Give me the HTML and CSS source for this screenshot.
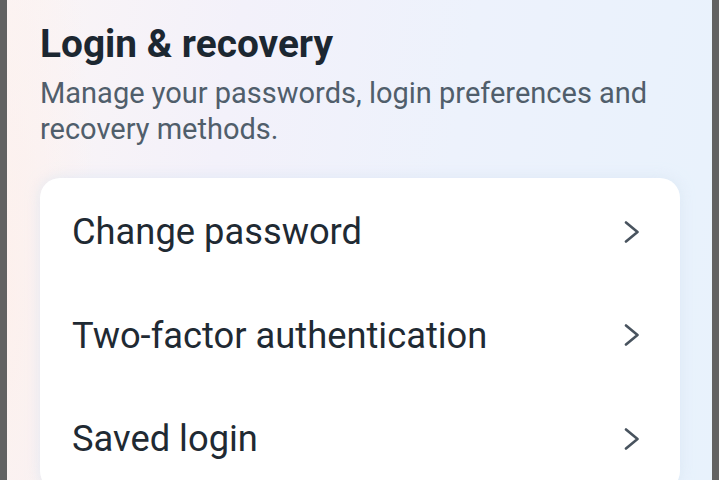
FILE: index.html
```html
<!DOCTYPE html>
<html lang="en">
<head>
<meta charset="utf-8">
<link rel="stylesheet" href="styles.css">
<title>Login & recovery</title>
</head>
<body>
<div class="frame">
  <div class="screen">
    <h1 class="title">Login &amp; recovery</h1>
    <p class="subtitle">Manage your passwords, login preferences and recovery methods.</p>
    <div class="card">
      <div class="row">
        <span class="label">Change password</span>
        <svg class="chev" width="16" height="22" viewBox="0 0 16 22"><path d="M2 1.5 L13.5 11 L2 20.5" fill="none" stroke="#48535e" stroke-width="2.6" stroke-linecap="round" stroke-linejoin="round"/></svg>
      </div>
      <div class="row">
        <span class="label">Two-factor authentication</span>
        <svg class="chev" width="16" height="22" viewBox="0 0 16 22"><path d="M2 1.5 L13.5 11 L2 20.5" fill="none" stroke="#48535e" stroke-width="2.6" stroke-linecap="round" stroke-linejoin="round"/></svg>
      </div>
      <div class="row">
        <span class="label">Saved login</span>
        <svg class="chev" width="16" height="22" viewBox="0 0 16 22"><path d="M2 1.5 L13.5 11 L2 20.5" fill="none" stroke="#48535e" stroke-width="2.6" stroke-linecap="round" stroke-linejoin="round"/></svg>
      </div>
    </div>
  </div>
</div>
</body>
</html>
```
FILE: styles.css
```css
html, body {
  margin: 0;
  padding: 0;
  height: 480px;
  overflow: hidden;
}
body {
  font-family: Roboto, "Noto Sans", sans-serif;
  background: #626262;
}
.frame {
  height: 480px;
  padding: 0 7px;
  box-sizing: border-box;
  background: #626262;
}
.screen {
  height: 480px;
  padding: 23px 32px 0 33px;
  box-sizing: border-box;
  background:
    radial-gradient(ellipse 90px 500px at 0% 60%, rgba(253, 240, 236, 0.9), rgba(253, 240, 236, 0) 100%),
    linear-gradient(100deg, #fbf5f5 0%, #f3f1fa 30%, #edf2fc 60%, #e8f2fc 100%);
}
.title {
  margin: 0;
  font-size: 38.8px;
  font-weight: 700;
  color: #1c2731;
  line-height: 42px;
}
.subtitle {
  margin: 10px 0 0;
  font-size: 29px;
  line-height: 36px;
  color: #505e6b;
  max-width: 640px;
}
.card {
  margin-top: 31px;
  background: #ffffff;
  border-radius: 20px;
  box-shadow: 0 0 14px rgba(210, 225, 240, 0.6);
  padding: 2px 40px 0 32px;
}
.row {
  height: 103.5px;
  display: flex;
  align-items: center;
  justify-content: space-between;
}
.label {
  font-size: 36.3px;
  color: #1f2a33;
}
.chev {
  display: block;
}
```
